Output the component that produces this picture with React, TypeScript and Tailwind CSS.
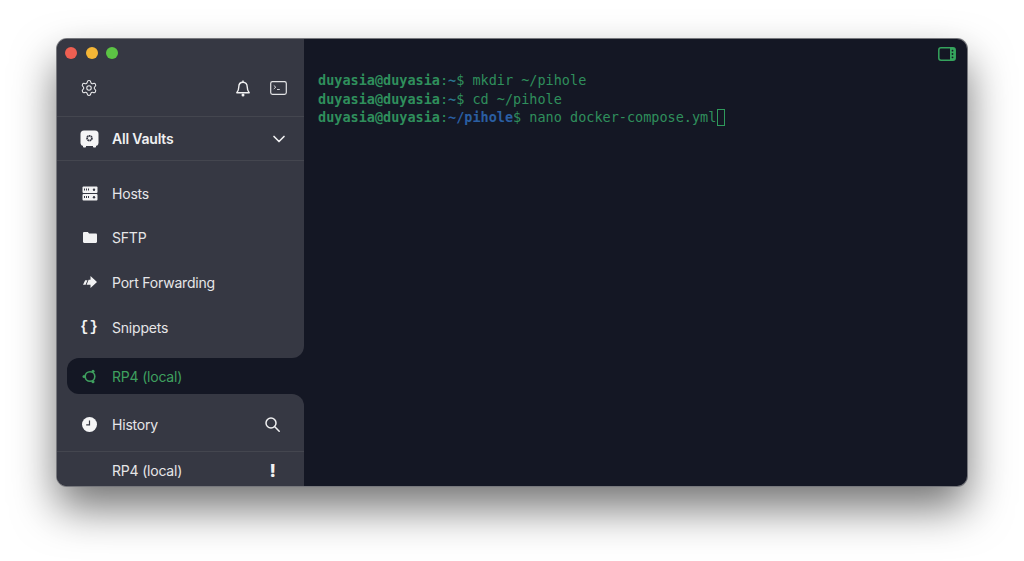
import { ChevronDown, Settings } from 'lucide-react';
import type { ReactNode } from 'react';

const HostsIcon = () => (
  <svg width="16" height="15" viewBox="0 0 16 15" fill="none">
    <rect x="0.5" y="0.5" width="15" height="6.4" rx="1" fill="#f2f2f3" />
    <rect x="0.5" y="8" width="15" height="6.4" rx="1" fill="#f2f2f3" />
    <path d="M2.5 2.5v2M4.5 2.5v2M6.5 2.5v2M2.5 10v2M4.5 10v2M6.5 10v2" stroke="#363843" />
    <circle cx="12" cy="3.7" r="1.2" fill="#363843" />
    <circle cx="12" cy="11.2" r="1.2" fill="#363843" />
  </svg>
);

const FolderIcon = () => (
  <svg width="14" height="11" viewBox="0 0 14 11" fill="#f2f2f3">
    <path d="M1.2 0h3.6l1.3 1.5h6.7c.7 0 1.2.5 1.2 1.2v7.1c0 .7-.5 1.2-1.2 1.2H1.2C.5 11 0 10.5 0 9.8V1.2C0 .5.5 0 1.2 0z" />
  </svg>
);

const ForwardIcon = () => (
  <svg width="14" height="12" viewBox="0 0 14 12" fill="#f2f2f3">
    <path d="M7.500 0L14 6l-6.500 6V8.800H3.600L5.600 3.800H7.500z" />
    <path d="M0 8.800L2.200 4.200H4.500L2.600 8.800z" />
  </svg>
);

const UbuntuIcon = () => (
  <svg width="15" height="15" viewBox="0 0 15 15" fill="none" stroke="#3fa05f" strokeWidth="1.6">
    <circle cx="8" cy="7.500" r="4.800" />
    <circle cx="2" cy="7.500" r="1.500" fill="#3fa05f" stroke="none" />
    <circle cx="11" cy="2.200" r="1.500" fill="#3fa05f" stroke="none" />
    <circle cx="11" cy="12.800" r="1.500" fill="#3fa05f" stroke="none" />
  </svg>
);

const ClockIcon = () => (
  <svg width="15" height="15" viewBox="0 0 15 15">
    <circle cx="7.500" cy="7.500" r="7.500" fill="#f5f5f6" />
    <path d="M7.500 3.500v4.300H4.200" fill="none" stroke="#363843" strokeWidth="1.200" />
  </svg>
);

const VaultIcon = () => (
  <svg width="19" height="18" viewBox="0 0 19 18">
    <rect x="0.500" y="0.500" width="18" height="15.500" rx="3.500" fill="#f5f5f6" />
    <rect x="3" y="15" width="3" height="2.500" rx="0.800" fill="#f5f5f6" />
    <rect x="13" y="15" width="3" height="2.500" rx="0.800" fill="#f5f5f6" />
    <circle cx="9.500" cy="8.200" r="2.400" fill="none" stroke="#363843" strokeWidth="1.800" strokeDasharray="1.500 0.400" />
  </svg>
);

const BellIcon = () => (
  <svg width="14" height="17" viewBox="0 0 14 17" fill="none" stroke="#f0f0f1" strokeWidth="1.400">
    <path d="M7 2.200c-2.700 0-4.200 2-4.200 4.600 0 2.800-.6 4.300-2 6h12.400c-1.400-1.700-2-3.200-2-6 0-2.600-1.500-4.600-4.200-4.600z" strokeLinejoin="round" />
    <path d="M7 .6v1.600" />
    <circle cx="7" cy="15" r="1.500" fill="#f0f0f1" stroke="none" />
  </svg>
);

const SearchIcon = () => (
  <svg width="15" height="15" viewBox="0 0 15 15" fill="none" stroke="#f0f0f1" strokeWidth="1.500" strokeLinecap="round">
    <circle cx="6" cy="6" r="5" />
    <path d="M9.800 9.800l4.400 4.400" />
  </svg>
);

const TerminalIcon = () => (
  <svg width="17" height="14" viewBox="0 0 17 14" fill="none" stroke="#e4e4e6">
    <rect x="0.700" y="0.700" width="15.600" height="12.600" rx="1.800" strokeWidth="1.200" />
    <path d="M3.800 4.500l2 1.700-2 1.700M7 8.500h2.800" strokeWidth="0.900" />
  </svg>
);

const PanelIcon = () => (
  <svg width="18" height="14" viewBox="0 0 18 14" fill="none">
    <rect x="0.800" y="0.800" width="16.400" height="12.400" rx="2.200" stroke="#35a35d" strokeWidth="1.500" />
    <rect x="12" y="1" width="5" height="12" fill="#35a35d" />
    <circle cx="14.500" cy="3.700" r="0.900" fill="#141724" />
    <circle cx="14.500" cy="7" r="0.900" fill="#141724" />
    <circle cx="14.500" cy="10.300" r="0.900" fill="#141724" />
  </svg>
);

const NavRow = ({ icon, label }: { icon: ReactNode; label: string }) => (
  <div className="flex h-[44.6px] items-center">
    <div className="flex w-[55px] shrink-0 justify-center pl-[10px]">{icon}</div>
    <span className="text-[14px] tracking-[-0.2px] text-[#e6e6e8]">{label}</span>
  </div>
);

const Prompt = ({ path, cmd, cursor }: { path: string; cmd: string; cursor?: boolean }) => (
  <div className="flex h-[18.500px] items-center whitespace-pre">
    <span className="font-bold text-[#2f8f5c]">duyasia@duyasia</span>
    <span className="text-[#2f8f5c]">:</span>
    <span className={path === '~' ? 'font-bold text-[#2a7590]' : 'font-bold text-[#2a5ea2]'}>{path}</span>
    <span className="text-[#2f8f5c]">$ {cmd}</span>
    {cursor && <span className="ml-px h-[17px] w-[8px] border border-[#2f9a5c]" />}
  </div>
);

export default function App() {
  return (
    <div className="h-[561px] w-[1024px] overflow-hidden bg-white pl-[57px] pt-[39px] font-['Inter',sans-serif]">
      <div className="flex h-[447px] w-[910px] overflow-hidden rounded-[10px] bg-[#141724] shadow-[0_22px_44px_rgba(0,0,0,0.55)] ring-1 ring-[#77787d]">
        <aside className="flex w-[247px] shrink-0 flex-col">
          <div className="rounded-br-xl bg-[#363843]">
            <div className="flex h-[28px] items-center gap-[8.300px] pl-[8.300px]">
              <span className="h-[12px] w-[12px] rounded-full bg-[#ee5f52]" />
              <span className="h-[12px] w-[12px] rounded-full bg-[#f5b636]" />
              <span className="h-[12px] w-[12px] rounded-full bg-[#5cc444]" />
            </div>
            <div className="flex h-[49px] items-center pb-[7px] pl-[23px] pr-[17px]">
              <Settings size={18} strokeWidth={1.400} className="text-[#ececee]" />
              <div className="ml-auto flex">
                <BellIcon />
              </div>
              <div className="ml-[20px] flex">
                <TerminalIcon />
              </div>
            </div>
            <div className="flex h-[45px] items-center border-y border-[#44464f] pl-[23px] pr-[15px]">
              <VaultIcon />
              <span className="ml-[13px] text-[14px] font-semibold tracking-[-0.2px] text-[#f0f0f1]">All Vaults</span>
              <ChevronDown size={20} strokeWidth={2} className="ml-auto text-[#f0f0f1]" />
            </div>
            <div className="pb-[9px] pt-[10px]">
              <NavRow icon={<HostsIcon />} label="Hosts" />
              <NavRow icon={<FolderIcon />} label="SFTP" />
              <NavRow icon={<ForwardIcon />} label="Port Forwarding" />
              <NavRow icon={<span className="font-['Liberation_Mono',monospace] text-[14px] font-bold leading-none tracking-[1px] text-[#f2f2f3]">{'{}'}</span>} label="Snippets" />
            </div>
          </div>
          <div className="bg-[#363843] pl-[10px]">
            <div className="flex h-[36px] items-center rounded-l-xl bg-[#141724]">
              <div className="flex w-[45px] justify-center">
                <UbuntuIcon />
              </div>
              <span className="text-[14px] tracking-[-0.2px] text-[#3fa05f]">RP4 (local)</span>
            </div>
          </div>
          <div className="min-h-0 flex-1 rounded-tr-xl bg-[#363843]">
            <div className="flex h-[58px] items-center border-b border-[#44464f] pr-[24px] pt-[4px]">
              <div className="flex w-[55px] shrink-0 justify-center pl-[10px]">
                <ClockIcon />
              </div>
              <span className="text-[14px] tracking-[-0.2px] text-[#e6e6e8]">History</span>
              <div className="ml-auto flex">
                <SearchIcon />
              </div>
            </div>
            <div className="flex h-[36px] items-center pl-[55px] pr-[28px]">
              <span className="text-[14px] tracking-[-0.2px] text-[#e6e6e8]">RP4 (local)</span>
              <span className="ml-auto text-[18px] font-extrabold text-[#f2f2f3]">!</span>
            </div>
          </div>
        </aside>
        <main className="min-w-0 flex-1">
          <div className="flex h-[32px] justify-end pr-[11px] pt-[8px]">
            <PanelIcon />
          </div>
          <div className="pl-[14px] font-['DejaVu_Sans_Mono',monospace] text-[13.500px]">
            <Prompt path="~" cmd="mkdir ~/pihole" />
            <Prompt path="~" cmd="cd ~/pihole" />
            <Prompt path="~/pihole" cmd="nano docker-compose.yml" cursor />
          </div>
        </main>
      </div>
    </div>
  );
}
